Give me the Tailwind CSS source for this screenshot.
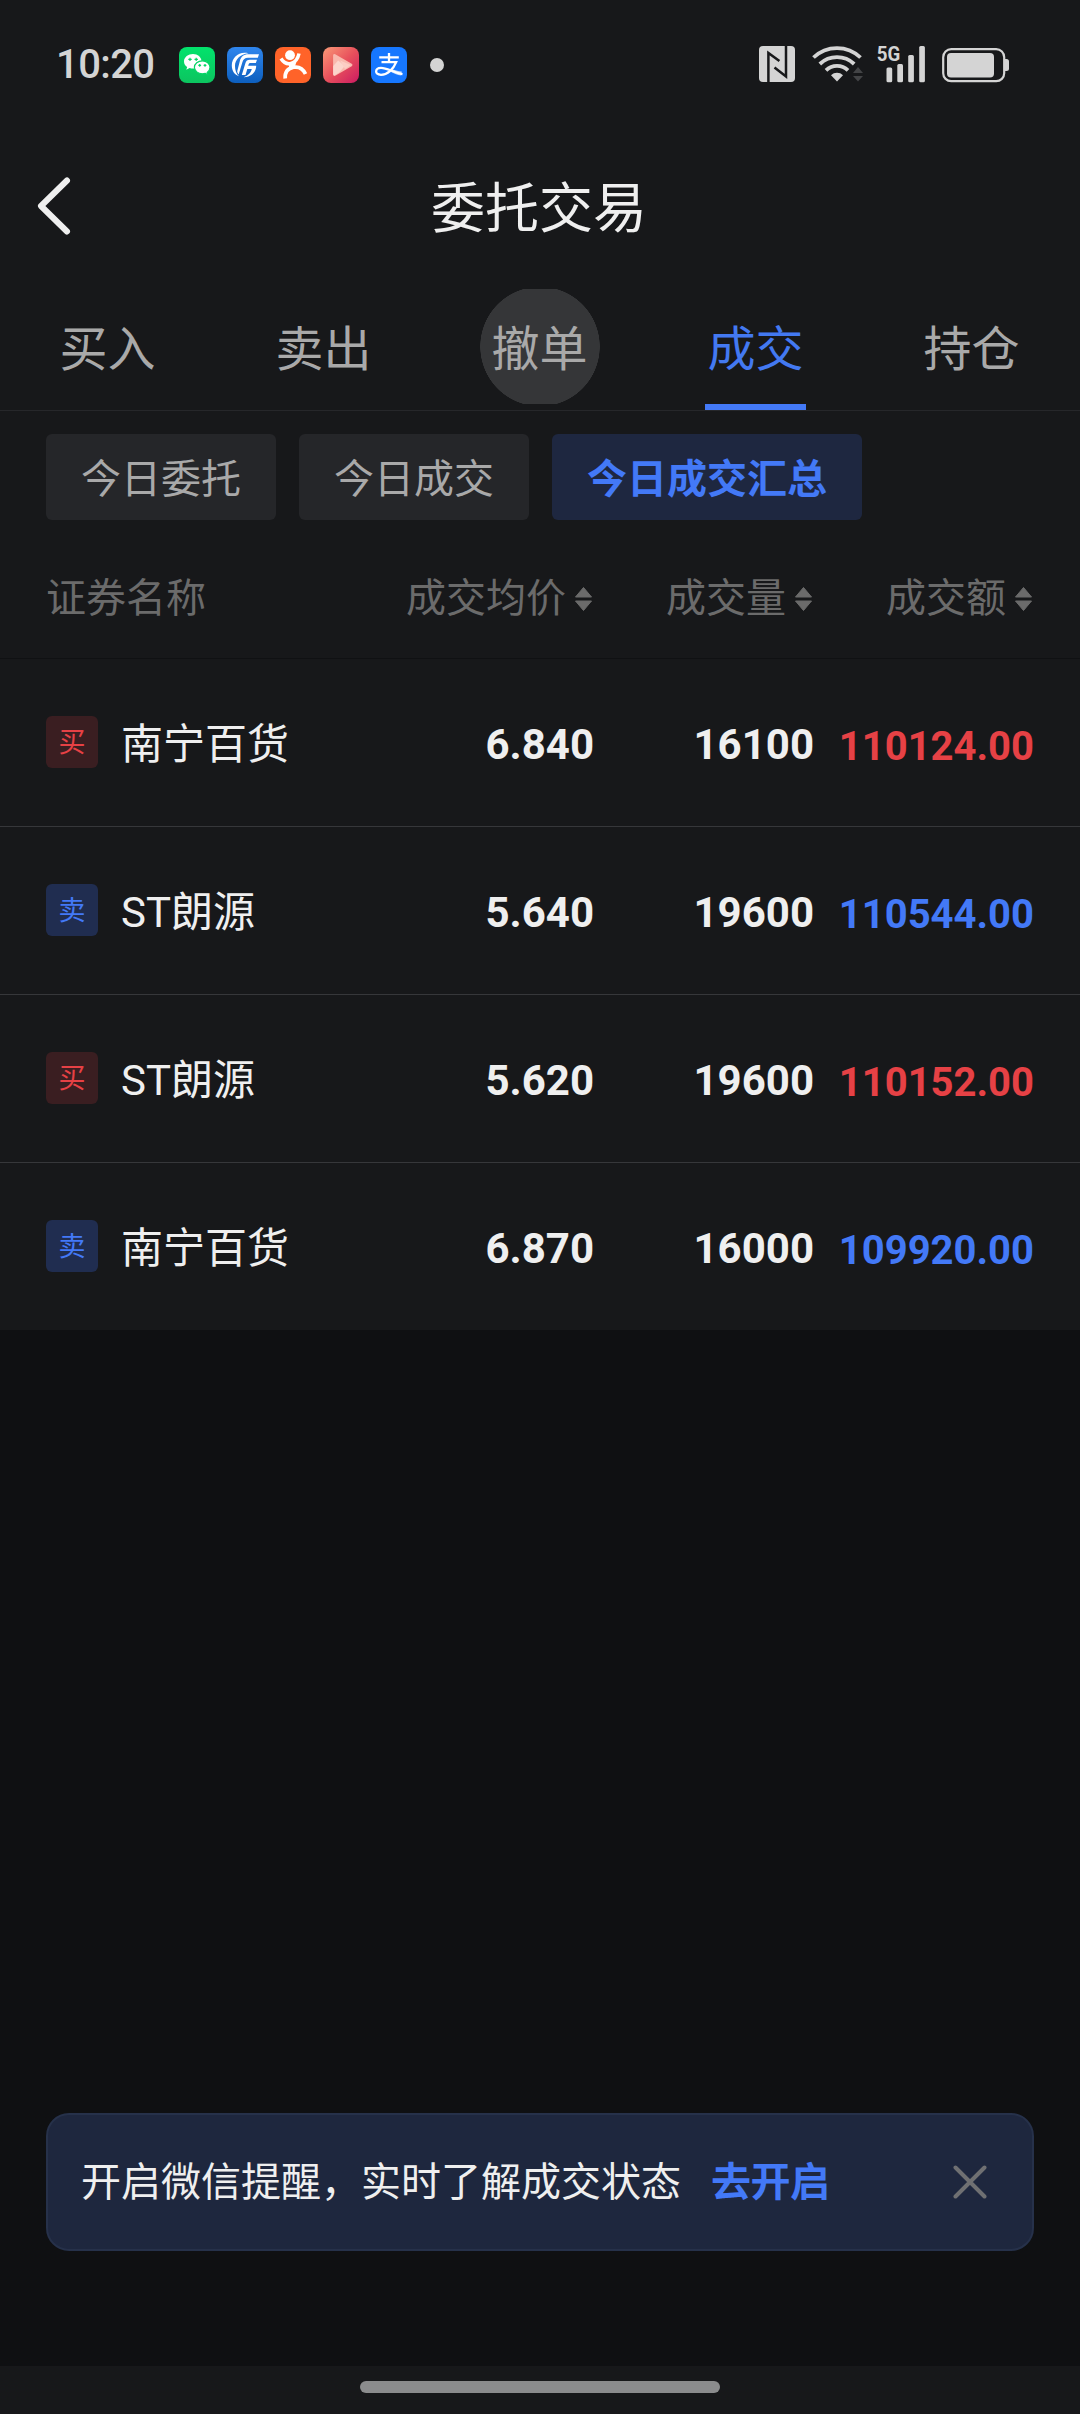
<!DOCTYPE html>
<html lang="zh-CN">
<head>
<meta charset="utf-8">
<title>委托交易</title>
<script src="https://cdn.jsdelivr.net/npm/@tailwindcss/browser@4"></script>
</head>
<body class="w-[1080px] h-[2414px] flex flex-col bg-[#0f1012] text-[#efefef] font-[Roboto,'Noto_Sans_CJK_SC',sans-serif] overflow-hidden">

<div class="h-[1330px] shrink-0 bg-[#17181a] flex flex-col">
  <!-- status bar -->
  <div class="h-[128px] shrink-0 flex items-center pl-[56px] pr-[71px] text-[#d4d4d4]">
    <span class="w-[123px] pt-[2px] text-[40px] leading-[40px] font-medium tracking-[-0.6px]">10:20</span>
    <div class="flex gap-3 items-center pt-[2px]">
      <svg class="size-9" viewBox="0 0 36 36"><defs><linearGradient id="wx" x2="0" y2="1"><stop stop-color="#02e36c"/><stop offset="1" stop-color="#0cc45f"/></linearGradient></defs><rect width="36" height="36" rx="8" fill="url(#wx)"/><path d="M14 7C9.300 7 5 10.200 5 14.400c0 2.400 1.300 4.300 3.200 5.600L7.300 22.700l3.300-1.600c1.200.4 2.300.5 3.600.5C18.900 21.600 22.500 18.500 22.500 14.300S18.700 7 14 7z" fill="#fff"/><path d="M23.400 13.800c-4.500 0-8 2.900-8 6.500s3.500 6.500 8 6.500c1 0 2-.2 2.900-.5l2.600 1.400-.7-2.300c1.700-1.200 2.800-3 2.800-5.100 0-3.600-3.400-6.500-7.600-6.500z" fill="#fff" stroke="#07d566" stroke-width="1.200"/><g stroke="#07d566" stroke-width="1.200"><path d="M11 10.700v3.400M9.300 12.400h3.400M17.200 10.700v3.400M15.500 12.400h3.400M20.700 16.900v2.800M19.300 18.300h2.800M26 16.900v2.800M24.600 18.300h2.800"/></g></svg>
      <svg class="size-9" viewBox="0 0 36 36"><defs><linearGradient id="gf" x2="0" y2="1"><stop stop-color="#2f86ee"/><stop offset="1" stop-color="#0d5fbe"/></linearGradient></defs><rect width="36" height="36" rx="8" fill="url(#gf)"/><path d="M21.500 6.300C12 4 4.800 10.500 4.800 18.500c0 5.500 3 9.300 7.200 10.700-2.700-2.500-4-6-4-10.200C8 12.500 13 7.500 21.500 6.300z" fill="#fff"/><path d="M32 7.200l-1.200 3.600H21c-3.300 0-4.700 1.500-5.700 4.700L11.700 27.500c-1.200-1.200-1.700-2.400-1.300-4l2.400-9.300C14 9.500 16.500 7.200 21.500 7.200z" fill="#fff"/><path d="M30 12.800l-1.200 3.300h-5.300c-1.200 0-1.700.5-2 1.700l-.3 1h8c0 6.200-4.500 11.200-12.700 11.400 5-1.800 7.500-4.600 8.300-8.300h-4.500l-1.800 6.200h-3.700l3.500-11.500c.8-2.800 2-3.800 4.700-3.800z" fill="#fff"/></svg>
      <svg class="size-9" viewBox="0 0 36 36"><rect width="36" height="36" rx="8" fill="#ff6329"/><circle cx="15" cy="8.200" r="4.900" fill="#fff"/><path d="M6 11.500c2.500 4 6 6 10 4.900C20.500 15.200 23 11.500 24 6.500" fill="none" stroke="#fff" stroke-width="3.500"/><path d="M10.200 31.500C9.700 25 12.500 21.500 18.500 20.300c4.800-.8 9.300 1 12 6.700" fill="none" stroke="#fff" stroke-width="3.700"/><path d="M13.500 16l8-1.500-2 6.500-5 2z" fill="#fff"/></svg>
      <svg class="size-9" viewBox="0 0 36 36"><defs><linearGradient id="vd" x2="1" y2="1"><stop stop-color="#f99a78"/><stop offset=".5" stop-color="#e8515c"/><stop offset="1" stop-color="#cb1a62"/></linearGradient></defs><rect width="36" height="36" rx="8" fill="url(#vd)"/><path d="M11.500 8.500L28 18l-16.500 9.500z" fill="#f9b9ae" stroke="#f9b9ae" stroke-width="2.800" stroke-linejoin="round"/><path d="M10.200 19l5-5.500 6.500 5.500-5.500 6.500-4 2.500c-1.200.6-2 0-2-1.200z" fill="#fcd5cc"/><path d="M17 13.500l11 4.500-6 4z" fill="#fccdc4"/></svg>
      <svg class="size-9" viewBox="0 0 36 36"><rect width="36" height="36" rx="8" fill="#1677ff"/><path d="M18 6v9M8.200 10.300h19.600M10.500 15.200h14.700C22.500 22 16.500 27.800 10 27.800c-7 0-6-7 0-7 6.500 0 12 4.700 21.500 6.300" fill="none" stroke="#fff" stroke-width="2.300"/><path d="M21 22.200c3.500 1.300 7 2 9.800 2.300l-.6 4c-4-.5-8-2.300-11-4z" fill="#fff" opacity=".7"/></svg>
    </div>
    <span class="ml-[23px] mt-[1px] size-3.5 rounded-full bg-[#d4d4d4]"></span>
    <div class="ml-auto flex items-center">
      <svg class="w-[250px] h-[64px]" viewBox="759 32 250 64" fill="#d4d4d4"><rect x="759" y="46" width="36" height="36" rx="4"/><g fill="none" stroke="#17181a" stroke-width="2.500"><path d="M768.400 83V53l11 8M786 45v31.500l-11.500-9"/></g>
        <g fill="none" stroke="#d4d4d4" stroke-width="3.800"><path d="M813.500 57.500a34 34 0 0 1 47 0M819.800 64a25 25 0 0 1 34.400 0M826 70.300a16 16 0 0 1 22 0"/></g><path d="M837 81.500l-6-6.300c3.300-3.300 8.700-3.300 12 0z"/>
        <path d="M853 73l5-6 5 6zM853 76l5 5.500 5-5.500z" fill="#434446"/>
        <text x="876.800" y="61" font-size="21" font-weight="700" textLength="23.500" lengthAdjust="spacingAndGlyphs" font-family="Roboto">5G</text>
        <rect x="886.500" y="67.500" width="5.700" height="14.700" rx="1.500"/><rect x="897.300" y="64" width="5.700" height="18.200" rx="1.500"/><rect x="908.200" y="55" width="5.700" height="27.200" rx="1.500"/><rect x="919.200" y="46" width="5.700" height="36.200" rx="1.500"/>
        <rect x="943.200" y="49.200" width="61" height="32" rx="8" fill="none" stroke="#d4d4d4" stroke-width="2.200"/><rect x="947" y="53" width="47" height="24.500" rx="4"/><path d="M1005 59h1.500q2.500 0 2.500 2.500v7q0 2.500-2.500 2.500H1005z"/></svg>
    </div>
  </div>

  <!-- title bar -->
  <div class="h-[161px] shrink-0 grid grid-cols-3 items-center">
    <svg class="ml-[34px] mb-[6px] w-[40px] h-[60px]" viewBox="0 0 40 60" fill="none" stroke="#efefef" stroke-width="6" stroke-linecap="round" stroke-linejoin="round"><path d="M33 4.500L7 30 33 55.500"/></svg>
    <h1 class="pt-[3px] pr-[2px] text-center text-[54px] leading-[64px]">委托交易</h1>
  </div>

  <!-- tabs -->
  <div class="h-[122px] shrink-0 grid grid-cols-5 text-center text-[48px] text-[#a9a9a9] border-b border-[#26272a]">
    <div class="h-[121px] pr-[1px] leading-[121px]">买入</div>
    <div class="h-[121px] pr-[1px] leading-[121px]">卖出</div>
    <div class="h-[115px] leading-[121px] pr-[1px] bg-[radial-gradient(circle_60px_at_center,#353638_59.500px,transparent_60px)]">撤单</div>
    <div class="h-[121px] flex justify-center text-[#4379f2]"><div class="h-[121px] w-[101px] mr-[1px] leading-[121px] border-b-[6px] border-[#4379f7]">成交</div></div>
    <div class="h-[121px] pr-[1px] leading-[121px]">持仓</div>
  </div>

  <!-- filters -->
  <div class="shrink-0 h-[109px] pt-[23px] pl-[46px] flex gap-[23px] text-[40px] leading-[92px] text-[#a9a9a9]">
    <div class="h-[86px] px-[35px] rounded-md bg-[#252629]">今日委托</div>
    <div class="h-[86px] px-[35px] rounded-md bg-[#252629]">今日成交</div>
    <div class="h-[86px] px-[35px] rounded-md bg-[#1e2740] text-[#4379f7] font-bold">今日成交汇总</div>
  </div>

  <!-- table head -->
  <div class="shrink-0 h-[139px] pt-5 px-[46px] grid grid-cols-[328px_220px_220px_220px] items-center text-[40px] leading-[60px] text-[#6b6b6b] border-b border-[#101113]">
    <div>证券名称</div>
    <div class="flex items-center justify-end gap-2 -ml-8">成交均价<svg class="w-[19px] h-[26px] mr-[1px]" viewBox="0 0 19 26" fill="#6b6b6b"><path d="M9.500 1.500L17.500 11h-16zM1.500 15h16l-8 9.500z" stroke="#6b6b6b" stroke-linejoin="round"/></svg></div>
    <div class="flex items-center justify-end gap-2">成交量<svg class="w-[19px] h-[26px] mr-[1px]" viewBox="0 0 19 26" fill="#6b6b6b"><path d="M9.500 1.500L17.500 11h-16zM1.500 15h16l-8 9.500z" stroke="#6b6b6b" stroke-linejoin="round"/></svg></div>
    <div class="flex items-center justify-end gap-2">成交额<svg class="w-[19px] h-[26px] mr-[1px]" viewBox="0 0 19 26" fill="#6b6b6b"><path d="M9.500 1.500L17.500 11h-16zM1.500 15h16l-8 9.500z" stroke="#6b6b6b" stroke-linejoin="round"/></svg></div>
  </div>

  <!-- rows -->
  <div class="shrink-0 h-[168px] pt-1 px-[46px] grid grid-cols-[328px_220px_220px_220px] items-center text-right text-[42px] leading-[60px] border-b border-[#36373a]">
    <div class="flex items-center gap-[23px]"><span class="size-[52px] mb-[5px] rounded-md bg-[#3a1e21] text-[#e64145] text-[27px] leading-[54px] text-center">买</span><span class="pt-[1px]">南宁百货</span></div>
    <div class="font-bold">6.840</div><div class="font-bold">16100</div><div class="font-bold text-[40px] pt-1 text-[#e64145]">110124.00</div>
  </div>
  <div class="shrink-0 h-[168px] pt-1 px-[46px] grid grid-cols-[328px_220px_220px_220px] items-center text-right text-[42px] leading-[60px] border-b border-[#36373a]">
    <div class="flex items-center gap-[23px]"><span class="size-[52px] mb-[5px] rounded-md bg-[#202d50] text-[#4379f7] text-[27px] leading-[54px] text-center">卖</span><span class="pt-[1px]">ST朗源</span></div>
    <div class="font-bold">5.640</div><div class="font-bold">19600</div><div class="font-bold text-[40px] pt-1 text-[#4379f7]">110544.00</div>
  </div>
  <div class="shrink-0 h-[168px] pt-1 px-[46px] grid grid-cols-[328px_220px_220px_220px] items-center text-right text-[42px] leading-[60px] border-b border-[#36373a]">
    <div class="flex items-center gap-[23px]"><span class="size-[52px] mb-[5px] rounded-md bg-[#3a1e21] text-[#e64145] text-[27px] leading-[54px] text-center">买</span><span class="pt-[1px]">ST朗源</span></div>
    <div class="font-bold">5.620</div><div class="font-bold">19600</div><div class="font-bold text-[40px] pt-1 text-[#e64145]">110152.00</div>
  </div>
  <div class="shrink-0 h-[167px] pt-1 px-[46px] grid grid-cols-[328px_220px_220px_220px] items-center text-right text-[42px] leading-[60px]">
    <div class="flex items-center gap-[23px]"><span class="size-[52px] mb-[5px] rounded-md bg-[#202d50] text-[#4379f7] text-[27px] leading-[54px] text-center">卖</span><span class="pt-[1px]">南宁百货</span></div>
    <div class="font-bold">6.870</div><div class="font-bold">16000</div><div class="font-bold text-[40px] pt-1 text-[#4379f7]">109920.00</div>
  </div>
</div>

<!-- reminder -->
<div class="mt-auto mx-[46px] mb-[115px] h-[138px] shrink-0 rounded-[23px] border-2 border-[#26314a] bg-[#1e273e] pl-[33px] pr-[45px] flex items-center text-[40px] leading-[60px]">
  <span class="pt-[2px]">开启微信提醒，实时了解成交状态</span>
  <span class="ml-[30px] pt-[2px] font-bold text-[#4379f7] tracking-[-0.5px]">去开启</span>
  <svg class="ml-auto size-[34px]" viewBox="0 0 34 34" fill="none" stroke="#6f7072" stroke-width="4" stroke-linecap="round"><path d="M2.500 2.500l29 29M31.500 2.500l-29 29"/></svg>
</div>

<div class="h-[48px] shrink-0 bg-[#17181a] flex justify-center pt-[15px]"><div class="w-[360px] h-3 rounded-full bg-[#8b8c8d]"></div></div>
</body>
</html>
